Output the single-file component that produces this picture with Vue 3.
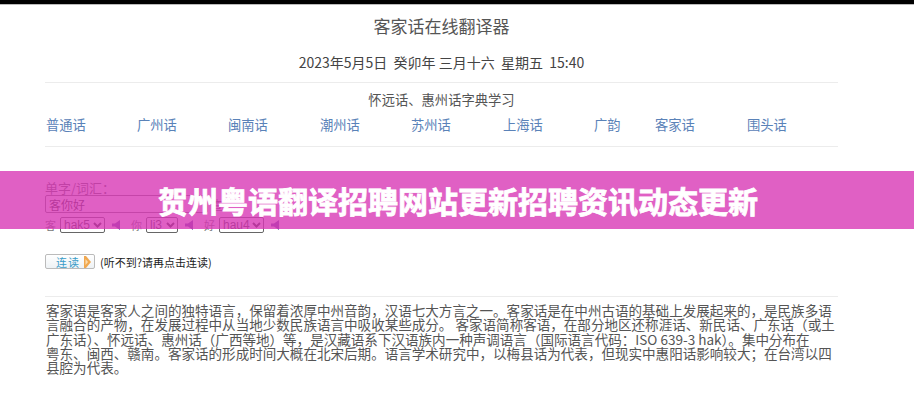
<template>
  <div class="page">
    <div class="topbar"></div>
    <h1 class="title">客家话在线翻译器</h1>
    <div class="date">2023年5月5日&nbsp;&nbsp;癸卯年 三月十六&nbsp;&nbsp;星期五&nbsp;&nbsp;15:40</div>
    <div class="rule-a"></div>
    <div class="sub">怀远话、惠州话字典学习</div>
    <nav class="links">
      <a v-for="l in links" :key="l.t" :style="{ width: l.w + 'px' }">{{ l.t }}</a>
    </nav>
    <div class="rule-b"></div>

    <div class="tool">
      <div class="label">单字/词汇：</div>
      <div class="query">
        <input class="word" value="客你好" />
        <span class="go">查</span>
      </div>
      <div class="reads">
        <template v-for="r in reads" :key="r.c">
          <span class="ch">{{ r.c }}</span>
          <span class="pick" :style="{ width: r.w + 'px' }">{{ r.v }}<svg width="9" height="6" viewBox="0 0 9 6"><path d="M1 1l3.500 3.500L8 1" fill="none" stroke="#333" stroke-width="2"/></svg></span>
          <svg class="spk" width="9" height="12" viewBox="0 0 9 12"><path d="M0 4.500h3L8 1v10L3 7.500H0z" fill="#6a4fa8"/></svg>
        </template>
      </div>
    </div>

    <div class="play">
      <span class="btn"><span class="btn-t">连读</span><svg width="9" height="12" viewBox="0 0 9 12"><path d="M1 0h2l5 6-5 6H1z" fill="#f0a850"/><path d="M2.500 3l2.500 3-2.500 3z" fill="#fbdcae"/></svg></span>
      <span class="hint">(听不到?请再点击连读)</span>
    </div>

    <div class="rule-c"></div>
    <p class="intro">
      <span>客家语是客家人之间的独特语言，保留着浓厚中州音韵，汉语七大方言之一。客家话是在中州古语的基础上发展起来的，是民族多语</span>
      <span>言融合的产物，在发展过程中从当地少数民族语言中吸收某些成分。 客家语简称客语，在部分地区还称涯话、新民话、广东话（或土</span>
      <span>广东话）、怀远话、惠州话（广西等地）等，是汉藏语系下汉语族内一种声调语言（国际语言代码：ISO 639-3 hak）。集中分布在</span>
      <span>粤东、闽西、赣南。客家话的形成时间大概在北宋后期。语言学术研究中，以梅县话为代表，但现实中惠阳话影响较大；在台湾以四</span>
      <span>县腔为代表。</span>
    </p>

    <div class="banner">贺州粤语翻译招聘网站更新招聘资讯动态更新</div>
  </div>
</template>

<script setup>
const links = [
  { t: '普通话', w: 91 },
  { t: '广州话', w: 91 },
  { t: '闽南话', w: 92 },
  { t: '潮州话', w: 91 },
  { t: '苏州话', w: 92 },
  { t: '上海话', w: 91 },
  { t: '广韵', w: 61 },
  { t: '客家话', w: 92 },
  { t: '围头话', w: 60 }
]
const reads = [
  { c: '客', v: 'hak5', w: 45 },
  { c: '你', v: 'li3', w: 32 },
  { c: '好', v: 'hau4', w: 45 }
]
</script>

<style>
html, body { margin: 0; background: #fff; }
</style>

<style scoped>
.page {
  position: relative; width: 914px; height: 400px; overflow: hidden; background: #fff;
  font-family: "Noto Sans CJK SC", "Liberation Sans", sans-serif;
  color: #444; box-sizing: border-box;
}
.topbar { height: 4px; background: #000; border-bottom: 1px solid #bbb; }
.title, .date, .sub { width: 793px; margin-left: 45px; text-align: center; }
.title { margin-top: 10px; height: 22px; line-height: 22px; font-size: 17px; font-weight: 400; color: #555; }
.date { margin-top: 15px; height: 20px; line-height: 20px; font-size: 14px; color: #444; }
.rule-a, .rule-b, .rule-c { margin-left: 45px; width: 793px; height: 1px; background: #ececec; }
.rule-a { margin-top: 10px; }
.sub { margin-top: 8px; height: 18px; line-height: 18px; font-size: 13.300px; color: #555; }
.links { display: flex; margin: 6px 0 0 46px; height: 20px; line-height: 20px; font-size: 13.300px; color: #5a82b8; }
.links a { display: block; flex: none; }
.rule-b { margin-top: 11px; }
.tool { margin: 33px 0 0 45px; color: #777; }
.label { height: 15px; line-height: 15px; font-size: 13px; color: #666; }
.query { display: flex; align-items: center; height: 18px; }
.word {
  width: 155px; height: 16px; padding: 0 3px; border: 1px solid #777; border-radius: 2px;
  font: 12px "Noto Sans CJK SC", sans-serif; color: #333; background: transparent; outline: none;
}
.go { margin-left: 3px; font-size: 12px; color: #555; }
.reads { display: flex; align-items: center; height: 17px; margin-top: 3px; font-size: 12px; }
.ch { width: 15px; color: #777; font-size: 11px; }
.pick {
  display: flex; align-items: center; justify-content: space-between; box-sizing: border-box;
  height: 16px; padding: 0 2px 0 3px; border: 1px solid #666; border-radius: 2px;
  font: 12px/14px "Liberation Sans", sans-serif; color: #444;
}
.spk { margin: 0 10px 0 7px; }
.play { display: flex; align-items: center; margin: 20px 0 0 45px; height: 17px; }
.btn {
  display: flex; align-items: center; justify-content: space-between; box-sizing: border-box;
  width: 50px; height: 15px; padding: 0 2px 0 10px; border: 1px solid #bbb; border-radius: 2px;
  background: linear-gradient(#fff, #eef2f5);
}
.btn-t { font-size: 11px; color: #3a9cc8; letter-spacing: 1px; }
.hint { margin-left: 5px; font-size: 11px; color: #222; }
.rule-c { margin-top: 26px; }
.intro { margin: 6px 0 0 46px; width: 800px; font-size: 13.550px; line-height: 14.300px; color: #555; white-space: nowrap; }
.intro span { display: block; }
.banner {
  position: absolute; left: 0; top: 171px; width: 100%; height: 58px; line-height: 58px;
  box-sizing: border-box; padding-left: 158px;
  background: rgba(216, 56, 181, 0.8);
  font-size: 30px; font-weight: 700; color: #fff; white-space: nowrap;
  -webkit-text-stroke: 0.8px #fff;
}
</style>
